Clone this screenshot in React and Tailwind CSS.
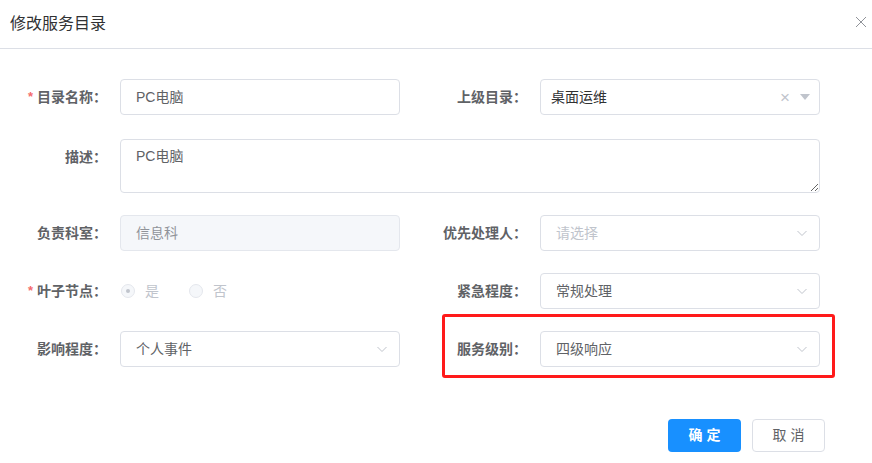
import React from "react";

const font = { fontFamily: '"Liberation Sans", "Noto Sans CJK SC", sans-serif' };

const Chevron = () => (
  <svg width="14" height="14" viewBox="0 0 14 14" className="text-[#c0c4cc]">
    <path d="M2.5 5l4.5 4.5L11.5 5" fill="none" stroke="currentColor" strokeWidth="1" />
  </svg>
);

const Label = ({ text, required }) => (
  <div className="w-[120px] shrink-0 pr-[13px] flex items-center justify-end text-[14px] font-bold text-[#606266]">
    {required && <span className="text-[#f56c6c] mr-[4px] text-[13px]">*</span>}
    {text}：
  </div>
);

const TextBox = ({ value, disabled }) => (
  <div
    className={`w-[280px] h-[36px] rounded-[4px] border flex items-center px-[15px] text-[14px] ${
      disabled ? "bg-[#f5f7fa] border-[#e4e7ed] text-[#909399]" : "bg-white border-[#dcdfe6] text-[#606266]"
    }`}
  >
    {value}
  </div>
);

const SelectBox = ({ value, placeholder }) => (
  <div className="w-[280px] h-[36px] rounded-[4px] border border-[#dcdfe6] bg-white flex items-center pl-[15px] pr-[10px] text-[14px]">
    <span className={`flex-1 ${value ? "text-[#606266]" : "text-[#c0c4cc]"}`}>{value || placeholder}</span>
    <Chevron />
  </div>
);

const Radio = ({ label, checked }) => (
  <div className="flex items-center mr-[30px]">
    <span className="w-[14px] h-[14px] rounded-full border border-[#e4e7ed] bg-[#f5f7fa] flex items-center justify-center">
      {checked && <span className="w-[4px] h-[4px] rounded-full bg-[#c0c4cc]" />}
    </span>
    <span className="ml-[10px] text-[14px] text-[#c0c4cc]">{label}</span>
  </div>
);

export default function App() {
  return (
    <div className="w-[872px] h-[463px] bg-white relative overflow-hidden" style={font}>
      <div className="h-[49px] border-b border-[#dcdfe6] flex items-center justify-between pl-[10px] pr-[5px]">
        <span className="text-[16px] text-[#303133]">修改服务目录</span>
        <svg width="12" height="12" viewBox="0 0 12 12" className="text-[#909399] mb-[4px]">
          <path d="M1 1l10 10M11 1L1 11" stroke="currentColor" strokeWidth="1" />
        </svg>
      </div>

      <div className="pt-[30px] flex flex-col">
        <div className="flex h-[36px] mb-[24px]">
          <div className="flex w-[420px]">
            <Label text="目录名称" required />
            <TextBox value="PC电脑" />
          </div>
          <div className="flex w-[420px]">
            <Label text="上级目录" />
            <div className="w-[280px] h-[36px] rounded-[4px] border border-[#dcdfe6] bg-white flex items-center pl-[10px] pr-[9px] text-[14px]">
              <span className="flex-1 text-[#303133]">桌面运维</span>
              <span className="text-[#c0c4cc] text-[17px] leading-none mr-[10px]">×</span>
              <svg width="10" height="6" viewBox="0 0 10 6" className="text-[#c0c4cc]">
                <path d="M0 0h10L5 6z" fill="currentColor" />
              </svg>
            </div>
          </div>
        </div>

        <div className="flex mb-[22px]">
          <div className="w-[120px] shrink-0 pr-[13px] pt-[8px] flex justify-end text-[14px] font-bold text-[#606266]">
            描述：
          </div>
          <textarea
            readOnly
            defaultValue="PC电脑"
            className="w-[700px] h-[54px] rounded-[4px] border border-[#dcdfe6] px-[15px] py-[6px] text-[14px] text-[#606266] outline-none"
            style={font}
          />
        </div>

        <div className="flex h-[36px] mb-[22px]">
          <div className="flex w-[420px]">
            <Label text="负责科室" />
            <TextBox value="信息科" disabled />
          </div>
          <div className="flex w-[420px]">
            <Label text="优先处理人" />
            <SelectBox placeholder="请选择" />
          </div>
        </div>

        <div className="flex h-[36px] mb-[22px]">
          <div className="flex w-[420px]">
            <Label text="叶子节点" required />
            <div className="flex items-center pl-[1px]">
              <Radio label="是" checked />
              <Radio label="否" />
            </div>
          </div>
          <div className="flex w-[420px]">
            <Label text="紧急程度" />
            <SelectBox value="常规处理" />
          </div>
        </div>

        <div className="flex h-[36px]">
          <div className="flex w-[420px]">
            <Label text="影响程度" />
            <SelectBox value="个人事件" />
          </div>
          <div className="flex w-[420px]">
            <Label text="服务级别" />
            <SelectBox value="四级响应" />
          </div>
        </div>

        <div className="flex justify-end pr-[47px] mt-[52px] gap-[11px]">
          <button className="w-[73px] h-[33px] rounded-[4px] bg-[#1890ff] text-white text-[14px] font-bold tracking-[4px] pl-[4px]">
            确定
          </button>
          <button className="w-[73px] h-[33px] rounded-[4px] border border-[#dcdfe6] bg-white text-[#606266] text-[14px] tracking-[4px] pl-[4px]">
            取消
          </button>
        </div>
      </div>

      <div className="absolute left-[442px] top-[314px] w-[393px] h-[64px] border-[3px] border-[#ff1a1a] rounded-[3px] pointer-events-none" />
    </div>
  );
}
